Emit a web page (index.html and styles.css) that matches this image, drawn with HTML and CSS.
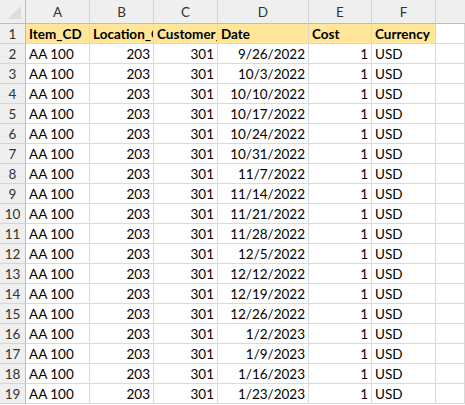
FILE: index.html
```html
<!DOCTYPE html>
<html>
<head>
<meta charset="utf-8">
<link rel="stylesheet" href="styles.css">
</head>
<body>
<div class="sheet" id="sheet">
  <div class="corner"><span class="tri"></span></div>
  <div class="ch">A</div><div class="ch">B</div><div class="ch">C</div><div class="ch">D</div><div class="ch">E</div><div class="ch">F</div><div class="ch last"></div>
</div>
<script src="app.js"></script>
</body>
</html>
```
FILE: app.js
```js
const dates=["9/26/2022","10/3/2022","10/10/2022","10/17/2022","10/24/2022","10/31/2022","11/7/2022","11/14/2022","11/21/2022","11/28/2022","12/5/2022","12/12/2022","12/19/2022","12/26/2022","1/2/2023","1/9/2023","1/16/2023","1/23/2023"];
const s=document.getElementById('sheet');
function cell(cls,txt){const d=document.createElement('div');d.className=cls;d.textContent=txt;s.appendChild(d);}
cell('rh','1');
['Item_CD','Location_CD','Customer_CD','Date','Cost','Currency'].forEach(t=>cell('c hd',t));
cell('c','');
dates.forEach((d,i)=>{
  cell('rh',String(i+2));
  cell('c','AA 100');
  cell('c r','203');
  cell('c r','301');
  cell('c r',d);
  cell('c r','1');
  cell('c','USD');
  cell('c','');
});
```
FILE: styles.css
```css
html,body{margin:0;padding:0;background:#fff;}
body{font-family:Lato,"Open Sans",sans-serif;font-size:13.5px;color:#000;overflow:hidden;}
.sheet{display:grid;grid-template-columns:26px 64px 64px 64px 91px 63px 64px 1fr;grid-template-rows:24px;grid-auto-rows:20px;width:465px;}
.sheet>div{box-sizing:border-box;white-space:nowrap;overflow:hidden;}
.corner{background:#efefef;border-right:1px solid #bdbdbd;border-bottom:1px solid #bdbdbd;position:relative;}
.tri{position:absolute;right:4px;bottom:4px;width:0;height:0;border-left:13px solid transparent;border-bottom:13px solid #dcdcdc;}
.ch{background:#efefef;border-right:1px solid #d4d4d4;border-bottom:1px solid #bdbdbd;text-align:center;color:#333;line-height:24px;}
.ch.last{border-right:none;}
.rh{background:#efefef;border-right:1px solid #bdbdbd;border-bottom:1px solid #d4d4d4;text-align:center;color:#333;line-height:21px;}
.c{border-right:1px solid #d9d9d9;border-bottom:1px solid #d9d9d9;padding:0 3px 0 3px;line-height:21px;}
.r{text-align:right;}
.hd{background:#ffe699;font-weight:bold;padding-right:0;}
```
